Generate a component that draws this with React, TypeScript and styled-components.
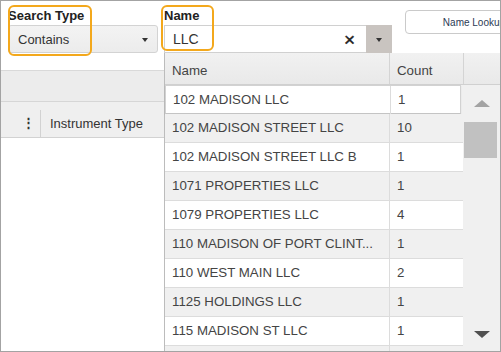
import React from 'react'
import styled, { createGlobalStyle } from 'styled-components'

const GlobalStyle = createGlobalStyle`
  body {
    margin: 0;
    font-family: "Liberation Sans", Arial, sans-serif;
    background: #fff;
  }
`;

interface NameRow {
  name: string;
  count: number | null;
}

const rows: NameRow[] = [
  { name: '102 MADISON LLC', count: 1 },
  { name: '102 MADISON STREET LLC', count: 10 },
  { name: '102 MADISON STREET LLC B', count: 1 },
  { name: '1071 PROPERTIES LLC', count: 1 },
  { name: '1079 PROPERTIES LLC', count: 4 },
  { name: '110 MADISON OF PORT CLINT...', count: 1 },
  { name: '110 WEST MAIN LLC', count: 2 },
  { name: '1125 HOLDINGS LLC', count: 1 },
  { name: '115 MADISON ST LLC', count: 1 },
  { name: '', count: null },
];

export default function App() {
  return (
    <>
      <GlobalStyle />
      <Frame>
        <Toolbar>
          <Field>
            <Label>Search Type</Label>
            <SelectBox>
              <span>Contains</span>
              <Caret />
            </SelectBox>
          </Field>
          <Field>
            <Label>Name</Label>
            <NameGroup>
              <NameInput>
                <span>LLC</span>
                <Clear>×</Clear>
              </NameInput>
              <DropButton>
                <Caret />
              </DropButton>
            </NameGroup>
          </Field>
          <LookupButton>Name Lookup</LookupButton>
        </Toolbar>

        <GroupBand />
        <GridHeader>
          <MenuDots>⋮</MenuDots>
          <HeaderCell>Instrument Type</HeaderCell>
        </GridHeader>
        <GridBody />

        <Highlight $left={7} $top={4} $width={84} $height={51} />
        <Highlight $left={160} $top={4} $width={53} $height={46} />

        <Dropdown>
          <DropHeader>
            <DropHeadCell>Name</DropHeadCell>
            <DropHeadCell $divider>Count</DropHeadCell>
            <DropHeadCell $divider />
          </DropHeader>
          <DropBody>
            <List>
              {rows.map((r, i) => (
                <Row key={i} $alt={i % 2 === 1} $selected={i === 0}>
                  <NameCell>{r.name}</NameCell>
                  <CountCell>{r.count}</CountCell>
                </Row>
              ))}
            </List>
            <Scrollbar>
              <ArrowUp />
              <Thumb />
              <Track />
              <ArrowDown />
            </Scrollbar>
          </DropBody>
        </Dropdown>
      </Frame>
    </>
  )
}

const Frame = styled.div`
  position: relative;
  width: 501px;
  height: 352px;
  box-sizing: border-box;
  border: 1px solid #a3a3a3;
  overflow: hidden;
  display: flex;
  flex-direction: column;
  background: #fff;
`;

const Toolbar = styled.div`
  display: flex;
  align-items: flex-start;
  gap: 6px;
  height: 69px;
  flex-shrink: 0;
  box-sizing: border-box;
  padding: 7px 0 0 7px;
`;

const Field = styled.div`
  display: flex;
  flex-direction: column;
  gap: 1px;
`;

const Label = styled.label`
  font-size: 13px;
  font-weight: bold;
  line-height: 16px;
  color: #222;
`;

const SelectBox = styled.div`
  width: 150px;
  height: 28px;
  box-sizing: border-box;
  display: flex;
  align-items: center;
  justify-content: space-between;
  padding: 0 9px;
  border: 1px solid #d3d3d3;
  border-radius: 3px;
  background: linear-gradient(#f3f3f3, #ececec);
  font-size: 13px;
  color: #333;
`;

const Caret = styled.span`
  width: 0;
  height: 0;
  border-left: 3.5px solid transparent;
  border-right: 3.5px solid transparent;
  border-top: 4px solid #333;
  margin-top: 1px;
`;

const NameGroup = styled.div`
  display: flex;
  width: 228px;
  height: 28px;
`;

const NameInput = styled.div`
  flex: 1;
  box-sizing: border-box;
  display: flex;
  align-items: center;
  justify-content: space-between;
  padding: 0 11px 0 8px;
  border: 1px solid #d0d0d0;
  border-right: none;
  background: #fff;
  font-size: 14px;
  color: #333;
`;

const Clear = styled.span`
  font-size: 19px;
  color: #222;
  line-height: 1;
  -webkit-text-stroke: 0.4px #222;
`;

const DropButton = styled.div`
  width: 26px;
  display: flex;
  align-items: center;
  justify-content: center;
  background: #c9c4c0;
`;

const LookupButton = styled.button`
  flex-shrink: 0;
  width: 138px;
  height: 24px;
  margin: 2px 0 0 7px;
  padding: 0;
  border: 1px solid #cacaca;
  border-radius: 4px;
  background: #fff;
  font-family: "Liberation Sans", Arial, sans-serif;
  font-size: 10px;
  color: #2c3b55;
  white-space: nowrap;
`;

const GroupBand = styled.div`
  height: 30px;
  flex-shrink: 0;
  background: #ececec;
  border-top: 1px solid #d9d9d9;
  border-bottom: 1px solid #d6d6d6;
`;

const GridHeader = styled.div`
  height: 35px;
  flex-shrink: 0;
  display: flex;
  align-items: stretch;
  background: #efefef;
  border-bottom: 1px solid #d2d2d2;
`;

const MenuDots = styled.span`
  width: 39px;
  box-sizing: border-box;
  padding: 6px 5px 0 0;
  display: flex;
  align-items: center;
  justify-content: flex-end;
  font-size: 13px;
  font-weight: bold;
  color: #333;
`;

const HeaderCell = styled.span`
  margin-top: 8px;
  display: flex;
  align-items: center;
  padding: 0 0 1px 9px;
  border-left: 1px solid #d2d2d2;
  font-size: 13px;
  color: #333;
`;

const GridBody = styled.div`
  flex: 1;
  background: #fff;
`;

const Highlight = styled.div<{ $left: number; $top: number; $width: number; $height: number }>`
  position: absolute;
  left: ${(p) => p.$left}px;
  top: ${(p) => p.$top}px;
  width: ${(p) => p.$width}px;
  height: ${(p) => p.$height}px;
  box-sizing: border-box;
  border: 2px solid #f3a81c;
  border-radius: 6px;
  pointer-events: none;
  z-index: 2;
`;

const Dropdown = styled.div`
  position: absolute;
  left: 163px;
  top: 52px;
  right: 0;
  bottom: 0;
  display: flex;
  flex-direction: column;
  border-left: 1px solid #bcbcbc;
  background: #f0f0f0;
  z-index: 1;
`;

const DropHeader = styled.div`
  display: grid;
  grid-template-columns: 224px 74px 1fr;
  height: 32px;
  flex-shrink: 0;
  box-sizing: border-box;
  background: linear-gradient(#f1f1f1, #e9e9e9);
  border-bottom: 1px solid #d0d0d0;
`;

const DropHeadCell = styled.div<{ $divider?: boolean }>`
  display: flex;
  align-items: center;
  padding: 3px 0 0 7px;
  font-size: 13.3px;
  color: #444;
  border-left: ${(p) => (p.$divider ? '1px solid #d4d4d4' : 'none')};
`;

const DropBody = styled.div`
  flex: 1;
  display: flex;
  min-height: 0;
`;

const List = styled.div`
  width: 298px;
  flex-shrink: 0;
  display: flex;
  flex-direction: column;
`;

const Row = styled.div<{ $alt: boolean; $selected: boolean }>`
  display: grid;
  grid-template-columns: 224px 1fr;
  height: 29px;
  flex-shrink: 0;
  box-sizing: border-box;
  background: ${(p) => (p.$alt ? '#f0f0f0' : '#fff')};
  border-bottom: 1px solid #dcdcdc;
  ${(p) =>
    p.$selected &&
    `
    border: 1px solid #d2d2d2;
    border-bottom-color: #c4c4c4;
    margin-right: 2px;
    box-shadow: 0 1px 1px rgba(0, 0, 0, 0.12);
  `}
`;

const NameCell = styled.div`
  padding: 0 7px;
  min-width: 0;
  line-height: 28px;
  font-size: 13.3px;
  color: #444;
  white-space: nowrap;
  overflow: hidden;
  text-overflow: ellipsis;
`;

const CountCell = styled.div`
  padding-left: 7px;
  line-height: 28px;
  font-size: 13.3px;
  color: #444;
  border-left: 1px solid #dcdcdc;
`;

const Scrollbar = styled.div`
  flex: 1;
  display: flex;
  flex-direction: column;
  align-items: center;
  background: #f0f0f0;
`;

const ArrowUp = styled.div`
  width: 0;
  height: 0;
  margin: 15px 0 15px;
  border-left: 8.5px solid transparent;
  border-right: 8.5px solid transparent;
  border-bottom: 7px solid #a3a3a3;
`;

const Thumb = styled.div`
  width: 33px;
  height: 36px;
  margin-right: 2px;
  background: #c1c1c1;
`;

const Track = styled.div`
  flex: 1;
`;

const ArrowDown = styled.div`
  width: 0;
  height: 0;
  margin: 0 0 13px;
  border-left: 8.5px solid transparent;
  border-right: 8.5px solid transparent;
  border-top: 7px solid #505050;
`;
